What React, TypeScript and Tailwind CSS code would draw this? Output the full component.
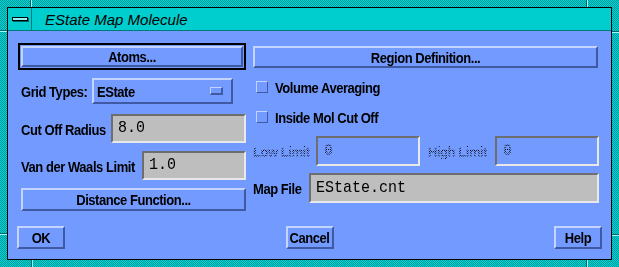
import React from "react";

const raised =
  "border-2 border-t-[#c3d5ff] border-l-[#c3d5ff] border-b-[#3f5aa3] border-r-[#3f5aa3] bg-[#739bff]";
const sunkenGray =
  "border-2 border-t-[#6e6e6e] border-l-[#6e6e6e] border-b-[#e8e8e8] border-r-[#e8e8e8] bg-[#bebebe]";
const sunkenBlue =
  "border-2 border-t-[#6e6e6e] border-l-[#6e6e6e] border-b-[#e8e8e8] border-r-[#e8e8e8] bg-[#739bff]";
const lbl =
  "inline-block text-[13px] font-bold tracking-[-0.45px] leading-none whitespace-nowrap scale-y-[1.18]";
const stipple =
  "bg-[image:repeating-conic-gradient(#000_0%_25%,transparent_0%_50%)] bg-[length:2px_2px] bg-clip-text text-transparent";
const mono = "inline-block font-['Liberation_Mono',monospace] text-[15px] leading-none scale-y-[1.12]";

function Btn({ label, className }: { label: string; className: string }) {
  return (
    <div className={`${raised} ${className} flex items-center justify-center`}>
      <span className={lbl}>{label}</span>
    </div>
  );
}

function Check({ label }: { label: string }) {
  return (
    <div className="mt-[9px] h-[20px] flex items-center pl-[3px] gap-[7px]">
      <div className="w-[12px] h-[12px] border-[1.5px] border-t-[#c3d5ff] border-l-[#c3d5ff] border-b-[#3f5aa3] border-r-[#3f5aa3] bg-[#739bff]" />
      <span className={lbl}>{label}</span>
    </div>
  );
}

export default function App() {
  return (
    <div className="w-[619px] h-[267px] relative p-[7px] bg-[image:repeating-conic-gradient(#00d4d4_0%_25%,#009898_0%_50%)] bg-[length:2px_2px] font-['Liberation_Sans',sans-serif] text-black">
      {/* frame handle marks */}
      <span className="absolute left-[30px] top-0 w-[2px] h-[7px] border-l border-l-[#006868] border-r border-r-[#9ff]" />
      <span className="absolute left-[586px] top-0 w-[2px] h-[7px] border-l border-l-[#006868] border-r border-r-[#9ff]" />
      <span className="absolute left-[31px] bottom-0 w-[2px] h-[7px] border-l border-l-[#006868] border-r border-r-[#9ff]" />
      <span className="absolute left-[586px] bottom-0 w-[2px] h-[7px] border-l border-l-[#006868] border-r border-r-[#9ff]" />
      <span className="absolute left-0 top-[30px] w-[7px] h-[2px] border-t border-t-[#006868] border-b border-b-[#9ff]" />
      <span className="absolute left-0 top-[233px] w-[7px] h-[2px] border-t border-t-[#006868] border-b border-b-[#9ff]" />
      <span className="absolute right-0 top-[31px] w-[7px] h-[2px] border-t border-t-[#006868] border-b border-b-[#9ff]" />
      <span className="absolute right-0 top-[234px] w-[7px] h-[2px] border-t border-t-[#006868] border-b border-b-[#9ff]" />

      <div className="w-full h-full border border-black flex flex-col bg-[#739bff]">
        {/* title bar */}
        <div className="h-[23px] flex bg-[#00cdcd] border-b border-b-[#007a7a]">
          <div className="w-[24px] h-full border-r border-r-[#007a7a] flex items-center justify-center">
            <div className="w-[16px] h-[4px] border border-black bg-[#8ff4f4] shadow-[1px_1px_0_#006060]" />
          </div>
          <div className="pl-[13px] italic text-[15px] leading-none self-center">
            EState Map Molecule
          </div>
        </div>

        {/* body */}
        <div className="grid grid-cols-[228px_346px] gap-x-[7px] ml-[10px] mt-[12px]">
          {/* left column */}
          <div className="flex flex-col">
            <div className="h-[27px] border-2 border-black p-px">
              <Btn label="Atoms..." className="h-full w-full" />
            </div>
            <div className="mt-[8px] h-[26px] flex items-center">
              <div className="w-[74px] pl-[3px]">
                <span className={lbl}>Grid Types:</span>
              </div>
              <div className={`${raised} w-[141px] h-full flex items-center pl-[3px] pr-[8px]`}>
                <span className={lbl}>EState</span>
                <div className="ml-auto w-[13px] h-[8px] border-t border-l border-t-[#c3d5ff] border-l-[#c3d5ff] border-b-2 border-r-2 border-b-[#3f5aa3] border-r-[#3f5aa3]" />
              </div>
            </div>
            <div className="mt-[10px] h-[29px] flex items-center">
              <div className="w-[93px] pl-[3px]">
                <span className={lbl}>Cut Off Radius</span>
              </div>
              <div className={`${sunkenGray} w-[135px] h-full flex items-center pl-[5px]`}>
                <span className={mono}>8.0</span>
              </div>
            </div>
            <div className="mt-[8px] h-[29px] flex items-center">
              <div className="w-[124px] pl-[3px]">
                <span className={lbl}>Van der Waals Limit</span>
              </div>
              <div className={`${sunkenGray} w-[104px] h-full flex items-center pl-[5px]`}>
                <span className={mono}>1.0</span>
              </div>
            </div>
            <Btn label="Distance Function..." className="mt-[8px] ml-[3px] w-[225px] h-[23px]" />
          </div>

          {/* right column */}
          <div className="flex flex-col">
            <Btn label="Region Definition..." className="mt-[3px] w-[345px] h-[22px]" />
            <Check label="Volume Averaging" />
            <div className="mt-[1px]">
              <Check label="Inside Mol Cut Off" />
            </div>
            <div className="mt-[9px] h-[30px] flex items-center">
              <div className="w-[63px]">
                <span className={`${lbl} ${stipple}`}>Low Limit</span>
              </div>
              <div className={`${sunkenBlue} w-[104px] h-full flex items-center pl-[6px]`}>
                <span className={`${mono} text-[14px] font-bold ${stipple}`}>0</span>
              </div>
              <div className="w-[67px] ml-[8px]">
                <span className={`${lbl} ${stipple}`}>High Limit</span>
              </div>
              <div className={`${sunkenBlue} w-[104px] h-full flex items-center pl-[6px]`}>
                <span className={`${mono} text-[14px] font-bold ${stipple}`}>0</span>
              </div>
            </div>
            <div className="mt-[7px] h-[30px] flex items-center">
              <div className="w-[56px]">
                <span className={lbl}>Map File</span>
              </div>
              <div className={`${sunkenGray} w-[290px] h-full flex items-center pl-[5px]`}>
                <span className={mono}>EState.cnt</span>
              </div>
            </div>
          </div>
        </div>

        {/* bottom buttons */}
        <div className="mt-[15px] mx-[9px] flex justify-between">
          <Btn label="OK" className="w-[48px] h-[23px]" />
          <Btn label="Cancel" className="w-[48px] h-[23px]" />
          <Btn label="Help" className="w-[48px] h-[23px]" />
        </div>
      </div>
    </div>
  );
}
